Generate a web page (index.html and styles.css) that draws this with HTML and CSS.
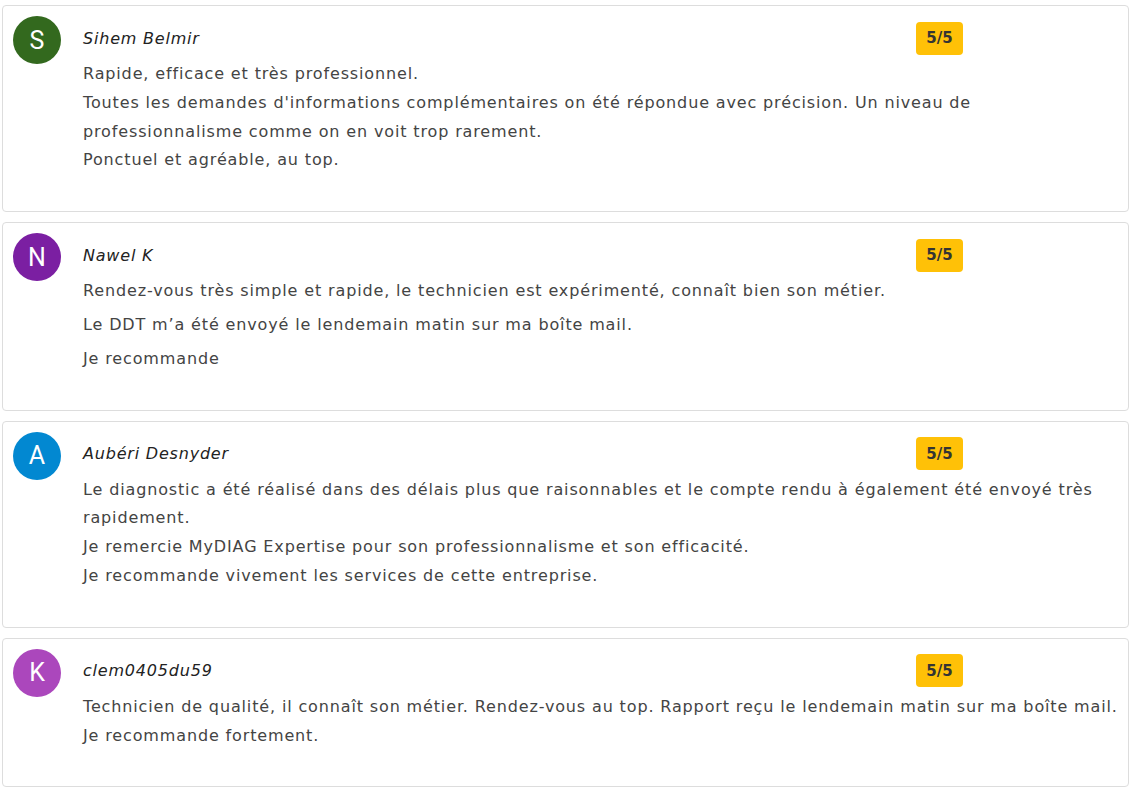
FILE: index.html
```html
<!DOCTYPE html>
<html lang="fr">
<head>
<meta charset="utf-8">
<title>Avis</title>
<link rel="stylesheet" href="styles.css">
</head>
<body>
<div class="reviews">
  <div class="card">
    <div class="avatar av-s">S</div>
    <div class="content">
      <div class="head">
        <span class="name">Sihem Belmir</span>
        <span class="badge">5/5</span>
      </div>
      <div class="body">
        <p>Rapide, efficace et très professionnel.<br>Toutes les demandes d'informations complémentaires on été répondue avec précision. Un niveau de professionnalisme comme on en voit trop rarement.<br>Ponctuel et agréable, au top.</p>
      </div>
    </div>
  </div>
  <div class="card">
    <div class="avatar av-n">N</div>
    <div class="content">
      <div class="head">
        <span class="name">Nawel K</span>
        <span class="badge">5/5</span>
      </div>
      <div class="body split">
        <p>Rendez-vous très simple et rapide, le technicien est expérimenté, connaît bien son métier.</p>
        <p>Le DDT m’a été envoyé le lendemain matin sur ma boîte mail.</p>
        <p>Je recommande</p>
      </div>
    </div>
  </div>
  <div class="card">
    <div class="avatar av-a">A</div>
    <div class="content">
      <div class="head">
        <span class="name">Aubéri Desnyder</span>
        <span class="badge">5/5</span>
      </div>
      <div class="body">
        <p>Le diagnostic a été réalisé dans des délais plus que raisonnables et le compte rendu à également été envoyé très rapidement.<br>Je remercie MyDIAG Expertise pour son professionnalisme et son efficacité.<br>Je recommande vivement les services de cette entreprise.</p>
      </div>
    </div>
  </div>
  <div class="card">
    <div class="avatar av-k">K</div>
    <div class="content">
      <div class="head">
        <span class="name">clem0405du59</span>
        <span class="badge">5/5</span>
      </div>
      <div class="body">
        <p>Technicien de qualité, il connaît son métier. Rendez-vous au top. Rapport reçu le lendemain matin sur ma boîte mail.<br>Je recommande fortement.</p>
      </div>
    </div>
  </div>
</div>
</body>
</html>
```
FILE: styles.css
```css
* { box-sizing: border-box; }
html, body { margin: 0; padding: 0; background: #fff; }
body {
  font-family: "DejaVu Sans", "Open Sans", sans-serif;
  color: #444444;
  padding: 5px 3px 5px 2px;
}
.reviews {
  display: flex;
  flex-direction: column;
  gap: 10px;
}
.card {
  display: flex;
  gap: 22px;
  border: 1px solid #dddddd;
  border-radius: 4px;
  padding: 10px 2px 10px 10px;
}
.avatar {
  flex: 0 0 48px;
  width: 48px;
  height: 48px;
  border-radius: 50%;
  color: #fff;
  font-family: Roboto, "Liberation Sans", sans-serif;
  font-size: 25px;
  display: flex;
  align-items: center;
  justify-content: center;
}
.av-s { background: #33691e; }
.av-n { background: #7b1fa2; }
.av-a { background: #0288d1; }
.av-k { background: #ab47bc; }
.content { flex: 1; min-width: 0; }
.head {
  display: flex;
  align-items: center;
  height: 44px;
}
.name {
  flex: 0 0 833px;
  font-style: italic;
  font-size: 16px;
  letter-spacing: 0.8px;
  color: #222;
}
.badge {
  background: #ffc107;
  color: #343434;
  font-weight: 700;
  font-size: 15px;
  border-radius: 4px;
  width: 47px;
  height: 33px;
  display: flex;
  align-items: center;
  justify-content: center;
}
.body p {
  margin: 0 0 26px;
  font-size: 16px;
  line-height: 28.8px;
  letter-spacing: 0.86px;
}
.body.split p { margin-bottom: 5px; }
.body.split p:last-child { margin-bottom: 26px; }
```
